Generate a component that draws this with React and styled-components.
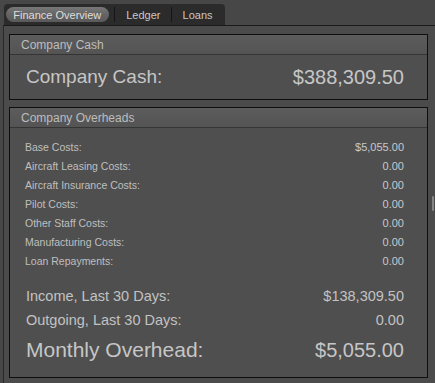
import React from "react";
import styled, { createGlobalStyle } from "styled-components";

const GlobalStyle = createGlobalStyle`
  html, body {
    margin: 0;
    padding: 0;
    background: #474747;
    font-family: "Liberation Sans", Arial, sans-serif;
    color: #c4c4c4;
  }
`;

const Screen = styled.div`
  width: 435px;
  height: 383px;
  overflow: hidden;
  padding-top: 4px;
  box-sizing: border-box;
`;

const TabStrip = styled.div`
  display: flex;
  align-items: center;
  margin-left: 4px;
  width: 221px;
  height: 21px;
  background: #2b2b2b;
  border-radius: 4px 4px 0 0;
  padding: 0 2px;
  box-sizing: border-box;
`;

const Tab = styled.div`
  height: 15px;
  display: flex;
  align-items: center;
  justify-content: center;
  font-size: 11px;
  color: ${(p) => (p.$active ? "#dedede" : "#c8c8c8")};
  width: ${(p) => p.$w}px;
  border-radius: 8px;
  background: ${(p) =>
    p.$active ? "linear-gradient(#777 0%, #646464 50%, #5a5a5a 100%)" : "transparent"};
  border-right: ${(p) => (p.$sep ? "1px solid #151515" : "none")};
  ${(p) => p.$sep && "border-radius: 0;"}
`;

const Frame = styled.div`
  position: relative;
  margin-left: 3px;
  height: 360px;
  border-left: 1px solid #2a2a2a;
  border-top: 1px solid #1a1a1a;
  background: #4b4b4b;
  padding: 8px 0 0 5px;
  box-sizing: border-box;
  display: flex;
  flex-direction: column;
  gap: 7px;
`;

const Grip = styled.div`
  position: absolute;
  left: 428px;
  top: 170px;
  width: 2px;
  height: 15px;
  background: #858585;
  border-radius: 1px;
`;

const Box = styled.div`
  width: 419px;
  height: ${(p) => p.$h}px;
  border: 1px solid #0e0e0e;
  background: #4f4f4f;
  box-sizing: border-box;
  display: flex;
  flex-direction: column;
`;

const BoxHeader = styled.div`
  height: 20px;
  flex: none;
  display: flex;
  align-items: center;
  padding-left: 11px;
  font-size: 12px;
  color: #bdbdbd;
  background: linear-gradient(#5c5c5c, #545454);
  border-bottom: 1px solid #353535;
  box-sizing: border-box;
`;

const BigRow = styled.div`
  flex: 1;
  display: flex;
  align-items: center;
  justify-content: space-between;
  padding: 0 23px 0 16px;
`;

const BigLabel = styled.span`
  font-size: ${(p) => p.$size}px;
  color: #c6c6c6;
`;

const BigValue = styled.span`
  font-size: 20px;
  color: #c6c6c6;
`;

const Rows = styled.div`
  display: flex;
  flex-direction: column;
  padding: 9px 23px 0 15px;
`;

const Row = styled.div`
  height: 19px;
  display: flex;
  align-items: center;
  justify-content: space-between;
`;

const Label = styled.span`
  font-size: 10.5px;
  color: #bfbfbf;
`;

const Value = styled.span`
  font-size: 11px;
  color: #c6c9cd;
`;

const Totals = styled.div`
  display: flex;
  flex-direction: column;
  padding: 14px 23px 0 16px;
`;

const TotalRow = styled.div`
  height: 24px;
  display: flex;
  align-items: center;
  justify-content: space-between;
  font-size: 14.5px;
  color: #c2c2c2;
`;

const MonthlyRow = styled.div`
  height: 36px;
  display: flex;
  align-items: center;
  justify-content: space-between;
`;

const costs = [
  ["Base Costs:", "$5,055.00"],
  ["Aircraft Leasing Costs:", "0.00"],
  ["Aircraft Insurance Costs:", "0.00"],
  ["Pilot Costs:", "0.00"],
  ["Other Staff Costs:", "0.00"],
  ["Manufacturing Costs:", "0.00"],
  ["Loan Repayments:", "0.00"],
];

export default function App() {
  return (
    <Screen>
      <GlobalStyle />
      <TabStrip>
        <Tab $active $w={105}>Finance Overview</Tab>
        <Tab $w={6} $sep />
        <Tab $w={57} $sep>Ledger</Tab>
        <Tab $w={52}>Loans</Tab>
      </TabStrip>
      <Frame>
        <Grip />
        <Box $h={66}>
          <BoxHeader>Company Cash</BoxHeader>
          <BigRow>
            <BigLabel $size={19}>Company Cash:</BigLabel>
            <BigValue>$388,309.50</BigValue>
          </BigRow>
        </Box>
        <Box $h={271}>
          <BoxHeader>Company Overheads</BoxHeader>
          <Rows>
            {costs.map(([label, value]) => (
              <Row key={label}>
                <Label>{label}</Label>
                <Value>{value}</Value>
              </Row>
            ))}
          </Rows>
          <Totals>
            <TotalRow>
              <span>Income, Last 30 Days:</span>
              <span>$138,309.50</span>
            </TotalRow>
            <TotalRow>
              <span>Outgoing, Last 30 Days:</span>
              <span>0.00</span>
            </TotalRow>
            <MonthlyRow>
              <BigLabel $size={21}>Monthly Overhead:</BigLabel>
              <BigValue>$5,055.00</BigValue>
            </MonthlyRow>
          </Totals>
        </Box>
      </Frame>
    </Screen>
  );
}
